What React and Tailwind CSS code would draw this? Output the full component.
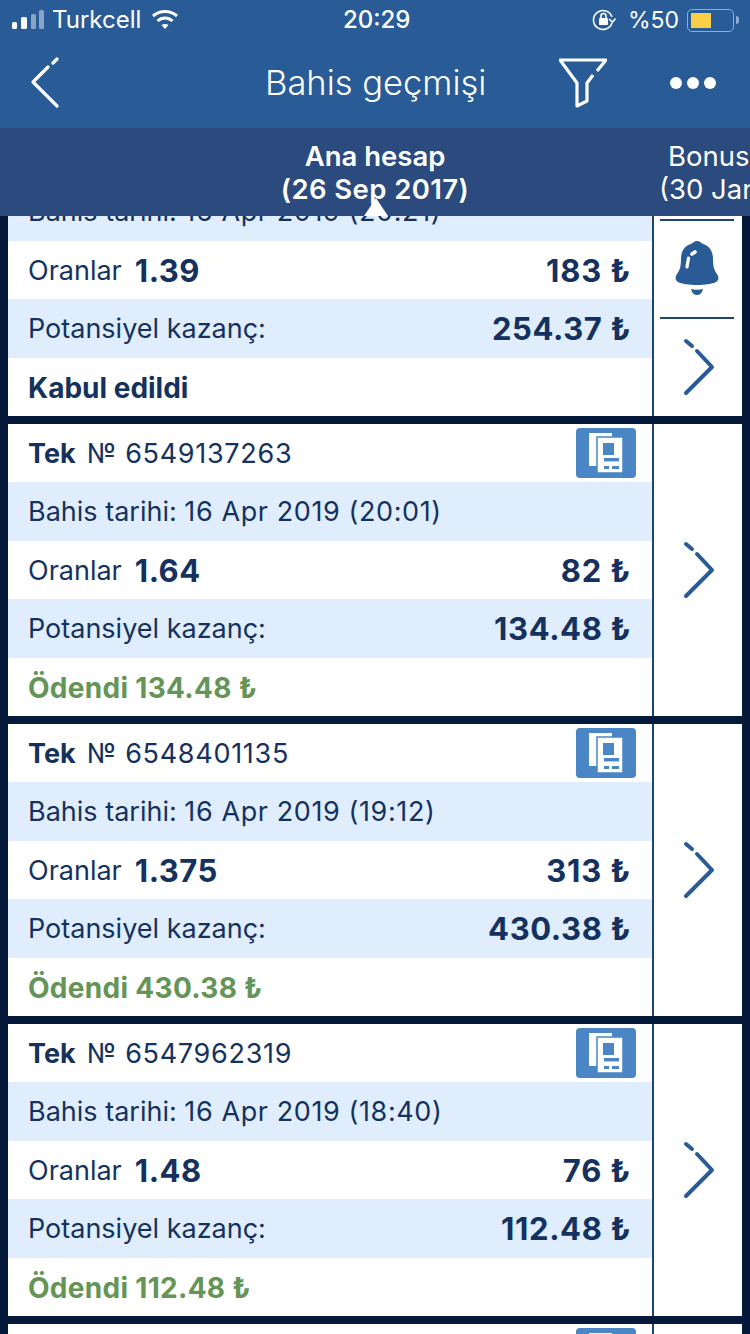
import React from 'react';

const bets = [
  { no: '6549137263', date: '16 Apr 2019 (20:01)', odds: '1.64', stake: '82', win: '134.48', status: 'Ödendi 134.48 ₺' },
  { no: '6548401135', date: '16 Apr 2019 (19:12)', odds: '1.375', stake: '313', win: '430.38', status: 'Ödendi 430.38 ₺' },
  { no: '6547962319', date: '16 Apr 2019 (18:40)', odds: '1.48', stake: '76', win: '112.48', status: 'Ödendi 112.48 ₺' },
];

const Chevron = () => (
  <svg className="ml-[2px]" width="32" height="58" viewBox="0 0 32 58" fill="none" stroke="#295b97" strokeWidth="4" strokeLinecap="round" strokeLinejoin="round">
    <path d="M3 3 L9 8" />
    <path d="M14 13 L29 29 L3 55" />
  </svg>
);

const Bell = () => (
  <svg className="mr-[3px]" width="44" height="55" viewBox="0 0 44 55">
    <path fill="#295b97" d="M22 0 C25 0 26 2 28 3 C35 5 38 11 38 18 C38 25 39 29 42 33 C44 36 44 39 41 41 C34 45 10 45 3 41 C0 39 0 36 2 33 C5 29 6 25 6 18 C6 11 9 5 16 3 C18 2 19 0 22 0 Z" />
    <path fill="#295b97" d="M16 48 C19 49 25 49 28 48 C27 52 25 54 22 54 C19 54 17 52 16 48 Z" />
    <path fill="none" stroke="#fff" strokeWidth="3.2" strokeLinecap="round" d="M12 26 L13.500 17" />
    <path fill="none" stroke="#fff" strokeWidth="3.6" strokeLinecap="round" d="M17 13 L20 11" />
  </svg>
);

const DocIcon = () => (
  <div className="w-[60px] h-[50px] rounded-[4px] bg-[#4a86c5] shrink-0">
    <svg width="60" height="50" viewBox="0 0 60 50">
      <rect x="13" y="5" width="23" height="33" fill="#fff" />
      <rect x="21" y="9" width="26" height="36" fill="#fff" stroke="#4a86c5" strokeWidth="1.5" />
      <rect x="27" y="15" width="11" height="12" fill="#4a86c5" />
      <rect x="28" y="30" width="15" height="3.4" fill="#4a86c5" />
      <rect x="28" y="38" width="5" height="3" fill="#4a86c5" />
      <rect x="36" y="38" width="7" height="3" fill="#4a86c5" />
    </svg>
  </div>
);

const Card = ({ children, side }) => (
  <div className="flex h-[292px] mb-2 bg-white">
    <div className="w-[644px] flex flex-col">{children}</div>
    <div className="w-[90px] border-l-2 border-[#1f4478] flex flex-col">{side}</div>
  </div>
);

const Row = ({ tint, children }) => (
  <div className={`pl-[20px] pr-[21px] pt-[2px] flex items-center justify-between ${tint ? 'h-[59px] bg-[#dfedfc]' : 'h-[58px] bg-white'}`}>{children}</div>
);

const BetRows = ({ date, odds, stake, win }) => (
  <>
    <Row tint>
      <span>Bahis tarihi: <span className="tracking-[0.6px]">{date}</span></span>
    </Row>
    <Row>
      <span className="flex items-center gap-[13px]">
        Oranlar <b className="text-[31px] font-bold tracking-[0.5px]">{odds}</b>
      </span>
      <b className="text-[31px] font-bold tracking-[0.8px]">{stake} ₺</b>
    </Row>
    <Row tint>
      <span>Potansiyel kazanç:</span>
      <b className="text-[31px] font-bold tracking-[0.6px]">{win} ₺</b>
    </Row>
  </>
);

const TitleRow = ({ no }) => (
  <div className="h-[58px] pl-[20px] pr-4 flex items-center justify-between">
    <span className="pt-[2px]">
      <b className="font-bold">Tek</b>
      <span className="ml-[11px] tracking-[0.7px]">№ {no}</span>
    </span>
    <DocIcon />
  </div>
);

const ChevronCell = () => <div className="flex-1 flex items-center justify-center"><Chevron /></div>;

export default function App() {
  return (
    <div className="w-[750px] h-[1334px] overflow-hidden flex flex-col bg-[#051a3a] font-['Inter','Noto_Sans',sans-serif] text-[27px] text-[#15325f]">
      <div className="h-[128px] shrink-0 bg-[#295b97] text-white">
        <div className="h-[40px] relative flex items-center justify-between pl-3 pr-[11px] text-[24px]">
          <div className="flex items-center">
            <svg width="34" height="22" viewBox="0 0 34 22" fill="#fff">
              <rect x="0" y="13" width="5" height="7" rx="1.5" />
              <rect x="9" y="8" width="6" height="12" rx="1.5" />
              <rect x="19" y="5" width="5" height="15" rx="1.5" opacity=".45" />
              <rect x="27" y="1" width="5" height="19" rx="1.5" opacity=".45" />
            </svg>
            <span className="ml-[6px]">Turkcell</span>
            <svg className="ml-[10px]" width="28" height="22" viewBox="0 0 28 22" fill="none" stroke="#fff" strokeWidth="3">
              <path d="M2 7 C9 1 19 1 26 7" />
              <path d="M6.5 12 C11 8 17 8 21.5 12" />
              <path d="M14 20 L10.5 16 C12.5 14.5 15.500 14.500 17.500 16 Z" fill="#fff" stroke="none" />
            </svg>
          </div>
          <span className="absolute left-[343px] font-medium">20:29</span>
          <div className="flex items-center">
            <svg width="24" height="22" viewBox="0 0 24 22" fill="none" stroke="#fff" strokeWidth="1.6">
              <path d="M20 14 A9.500 9.500 0 1 1 20 8" />
              <path d="M17 10 L20.500 13 L23.500 9.500" />
              <rect x="7" y="9" width="9" height="7" rx="1" fill="#fff" stroke="none" />
              <path d="M9 9 V7 A2.500 2.500 0 0 1 14 7 V9" />
            </svg>
            <span className="ml-[12px] text-[23px]">%50</span>
            <div className="ml-[8px] w-[47px] h-[23px] rounded-[5px] border border-[#8fadd0] p-[3px]">
              <div className="w-[20px] h-[15px] bg-[#f9d045]" />
            </div>
            <div className="ml-[2px] w-[3px] h-[8px] rounded-r-sm bg-[#8fadd0]" />
          </div>
        </div>
        <div className="h-[88px] relative flex items-center justify-between pl-[30px] pr-[34px] pb-[2px]">
          <svg width="30" height="52" viewBox="0 0 30 52" fill="none" stroke="#fff" strokeWidth="3.2" strokeLinecap="round" strokeLinejoin="round">
            <path d="M27 2 L23 6" />
            <path d="M18 10 L3 25 L27 49" />
          </svg>
          <span className="absolute left-[265px] text-[34.5px] font-light">Bahis geçmişi</span>
          <div className="flex items-center gap-[63px]">
            <svg width="48" height="50" viewBox="0 0 48 50" fill="none" stroke="#fff" strokeWidth="3.2" strokeLinejoin="round">
              <path d="M38 13 L47 2 H1 L18 25 V48 L28 43 V25 L34 17" />
            </svg>
            <div className="flex gap-[5px]">
              <span className="w-[12px] h-[12px] rounded-full bg-white" />
              <span className="w-[12px] h-[12px] rounded-full bg-white" />
              <span className="w-[12px] h-[12px] rounded-full bg-white" />
            </div>
          </div>
        </div>
      </div>

      <div className="h-[88px] shrink-0 relative z-10 bg-[#2b4a7e] text-white text-[27.5px] leading-[33px] overflow-hidden">
        <div className="absolute left-[375px] -translate-x-1/2 top-[12px] text-center font-semibold whitespace-nowrap">
          <div>Ana hesap</div>
          <div className="tracking-[0.4px]">(26 Sep 2017)</div>
        </div>
        <div className="absolute left-[659px] top-[12px] text-center font-normal whitespace-nowrap">
          <div>Bonus</div>
          <div>(30 Jan</div>
        </div>
        <div className="absolute left-[364px] bottom-0 w-0 h-0 border-l-[12px] border-r-[12px] border-b-[18px] border-l-transparent border-r-transparent border-b-white" />
      </div>

      <div className="flex-1 min-h-0 overflow-hidden px-2">
        <div className="-mt-[92px]">
          <Card
            side={
              <>
                <div className="h-[95px]" />
                <div className="h-[98px] flex items-center justify-center relative">
                  <div className="absolute left-[6px] right-[8px] top-0 h-[2px] bg-[#1f4478]" />
                  <Bell />
                </div>
                <div className="flex-1 flex items-center justify-center relative">
                  <div className="absolute left-[6px] right-[8px] top-0 h-[2px] bg-[#1f4478]" />
                  <Chevron />
                </div>
              </>
            }
          >
            <div className="h-[58px]" />
            <BetRows date="16 Apr 2019 (20:21)" odds="1.39" stake="183" win="254.37" />
            <Row>
              <b className="font-bold text-[28px]">Kabul edildi</b>
            </Row>
          </Card>
          {bets.map((b) => (
            <Card key={b.no} side={<ChevronCell />}>
              <TitleRow no={b.no} />
              <BetRows date={b.date} odds={b.odds} stake={b.stake} win={b.win} />
              <Row>
                <b className="font-bold text-[28px] tracking-[0.3px] text-[#649556]">{b.status}</b>
              </Row>
            </Card>
          ))}
          <Card side={<div />}>
            <TitleRow no="6547000000" />
          </Card>
        </div>
      </div>
    </div>
  );
}
